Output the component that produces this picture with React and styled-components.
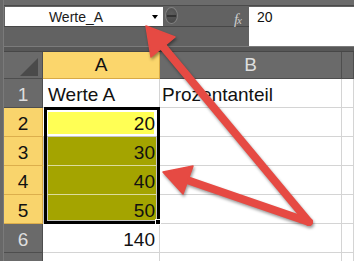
import React from 'react';
import styled, { createGlobalStyle } from 'styled-components';

const Global = createGlobalStyle`
  html, body { margin: 0; padding: 0; background: #626262; }
  body { width: 354px; height: 261px; overflow: hidden; font-family: "Liberation Sans", Arial, sans-serif; }
`;

const Window = styled.div`
  position: relative;
  width: 354px;
  height: 261px;
  overflow: hidden;
  box-sizing: border-box;
  padding-left: 4px;
  background: linear-gradient(to right, #686868 0 3px, #7a7a7a 3px 4px, #626262 4px);
  display: flex;
  flex-direction: column;
`;

const TopStrip = styled.div`
  height: 5px;
  flex: none;
  background: #6b6b6b;
  border-bottom: 1px solid #4a4a4a;
`;

const Toolbar = styled.div`
  display: flex;
  height: 40px;
  flex: none;
`;

const NamePanel = styled.div`
  width: 245px;
  display: flex;
  flex-direction: column;
`;

const NameRow = styled.div`
  height: 20px;
  display: flex;
  align-items: flex-start;
  border-bottom: 1px solid #474747;
`;

const NameBox = styled.div`
  margin: 1px 0 0 1px;
  width: 158px;
  height: 19px;
  background: #fff;
  display: flex;
  align-items: center;
`;

const NameText = styled.div`
  flex: 1;
  text-align: center;
  font-size: 14px;
  line-height: 16px;
  color: #1b1b1b;
`;

const DropArrow = styled.div`
  width: 16px;
  display: flex;
  justify-content: center;
  &::after {
    content: "";
    border-left: 3.5px solid transparent;
    border-right: 3.5px solid transparent;
    border-top: 4px solid #000;
  }
`;

const Grip = styled.div`
  margin: 1px 0 0 2px;
  width: 13px;
  height: 17px;
  box-sizing: border-box;
  border-radius: 50%;
  background: radial-gradient(circle at 50% 35%, #5c5c5c, #454545);
  border: 1px solid #808080;
  display: flex;
  align-items: center;
  justify-content: center;
  &::after {
    content: "";
    width: 9px;
    height: 2px;
    background: #333;
  }
`;

const FxLabel = styled.div`
  margin: 5px 8px 0 auto;
  font-family: "Liberation Serif", "DejaVu Serif", serif;
  font-style: italic;
  color: #cdcdcd;
  font-size: 15px;
  line-height: 16px;
  letter-spacing: -1px;
  & > small { font-size: 11px; }
`;

const FormulaBox = styled.div`
  flex: 1;
  margin-top: 1px;
  height: 39px;
  box-sizing: border-box;
  background: #fff;
  padding: 2px 0 0 8px;
  font-size: 14px;
  line-height: 16px;
  color: #111;
`;

const Separator = styled.div`
  height: 4px;
  flex: none;
  border-top: 1px solid #7b7b7b;
  background: #575757;
  border-bottom: 1px solid #474747;
`;

const Sheet = styled.div`
  position: relative;
  display: grid;
  grid-template-columns: 39px 117px 182px 1fr;
  grid-template-rows: 27px repeat(7, 29px);
  font-size: 19px;
`;

const Corner = styled.div`
  background: #6a6a6a;
  border-right: 1px solid #4e4e4e;
  border-bottom: 1px solid #4e4e4e;
  display: flex;
  justify-content: flex-end;
  align-items: flex-end;
  padding: 0 4px 2px 0;
`;

const ColHeader = styled.div`
  background: ${p => (p.$active ? '#fbd66c' : '#6a6a6a')};
  color: ${p => (p.$active ? '#111' : '#dedede')};
  border-right: 1px solid ${p => (p.$active ? '#d8aa46' : '#4e4e4e')};
  border-bottom: 1px solid ${p => (p.$active ? '#d8aa46' : '#4e4e4e')};
  text-align: center;
  line-height: 26px;
`;

const RowHeader = styled.div`
  background: ${p => (p.$active ? '#f9d46c' : '#6a6a6a')};
  color: ${p => (p.$active ? '#111' : '#dedede')};
  border-right: 1px solid ${p => (p.$active ? '#d8aa46' : '#4e4e4e')};
  border-bottom: 1px solid ${p => (p.$active ? '#dcae4c' : '#4e4e4e')};
  text-align: center;
  padding-top: 4px;
  line-height: 24px;
`;

const variants = {
  plain: 'background: #fff; border-bottom-color: #d4d4d4;',
  active: `
    background: #ffff55;
    border-bottom-color: #c4c4c4;
    box-shadow: inset 5px 4px 0 #fff, inset -5px -2px 0 #fff;
  `,
  range: `
    background: #a4a400;
    border-bottom-color: #dcdc9c;
    box-shadow: inset 5px 0 0 #c8c8c8, inset -3px 0 0 #c8c8c8;
  `,
  rangeEnd: `
    background: #a4a400;
    border-bottom-color: #d4d4d4;
    box-shadow: inset 5px 0 0 #c8c8c8, inset -3px -3px 0 #c8c8c8;
  `,
};

const Cell = styled.div`
  border-right: 1px solid #d4d4d4;
  border-bottom: 1px solid #d4d4d4;
  padding: 4px 4px 0 ${p => p.$pl ?? 4}px;
  line-height: 24px;
  color: #111;
  white-space: nowrap;
  text-align: ${p => (p.$right ? 'right' : 'left')};
  ${p => variants[p.$variant || 'plain']}
`;

const Selection = styled.div`
  position: absolute;
  left: 40px;
  top: 55px;
  width: 116px;
  height: 117px;
  box-sizing: border-box;
  border: 3px solid #000;
  pointer-events: none;
`;

const FillHandle = styled.div`
  position: absolute;
  right: -4px;
  bottom: -4px;
  width: 4px;
  height: 4px;
  background: #000;
  border: 1px solid #fff;
`;

const Arrows = styled.svg`
  position: absolute;
  left: 0;
  top: 0;
  pointer-events: none;
  filter: drop-shadow(1px 2px 1.5px rgba(0, 0, 0, 0.4));
`;

const rows = [
  { n: '1', a: 'Werte A', b: 'Prozentanteil' },
  { n: '2', a: '20', num: true, v: 'active', hl: true },
  { n: '3', a: '30', num: true, v: 'range', hl: true },
  { n: '4', a: '40', num: true, v: 'range', hl: true },
  { n: '5', a: '50', num: true, v: 'rangeEnd', hl: true },
  { n: '6', a: '140', num: true },
  { n: '', a: '' },
];

export default function App() {
  const red = '#e64a43';
  return (
    <Window>
      <Global />
      <TopStrip />
      <Toolbar>
        <NamePanel>
          <NameRow>
            <NameBox>
              <NameText>Werte_A</NameText>
              <DropArrow />
            </NameBox>
            <Grip />
            <FxLabel>f<small>x</small></FxLabel>
          </NameRow>
        </NamePanel>
        <FormulaBox>20</FormulaBox>
      </Toolbar>
      <Separator />
      <Sheet>
        <Corner>
          <svg width="18" height="18" viewBox="0 0 18 18">
            <polygon points="18,0 18,18 0,18" fill="#4a4a4a" />
          </svg>
        </Corner>
        <ColHeader $active>A</ColHeader>
        <ColHeader>B</ColHeader>
        <ColHeader />
        {rows.map((r, i) => (
          <React.Fragment key={i}>
            <RowHeader $active={r.hl}>{r.n}</RowHeader>
            <Cell $right={r.num} $variant={r.v} $pl={5}>{r.a}</Cell>
            <Cell $pl={2}>{r.b || ''}</Cell>
            <Cell />
          </React.Fragment>
        ))}
        <Selection>
          <FillHandle />
        </Selection>
      </Sheet>
      <Arrows width="354" height="261" viewBox="0 0 354 261">
        <line x1="309" y1="222" x2="160" y2="43" stroke={red} strokeWidth="8" strokeLinecap="round" />
        <polygon points="146,26 175,37 151,57" fill={red} strokeLinejoin="round" stroke={red} strokeWidth="1.5" />
        <line x1="309" y1="222" x2="184" y2="179" stroke={red} strokeWidth="8" strokeLinecap="round" />
        <polygon points="163,172 193,166 183,194" fill={red} strokeLinejoin="round" stroke={red} strokeWidth="1.5" />
      </Arrows>
    </Window>
  );
}
